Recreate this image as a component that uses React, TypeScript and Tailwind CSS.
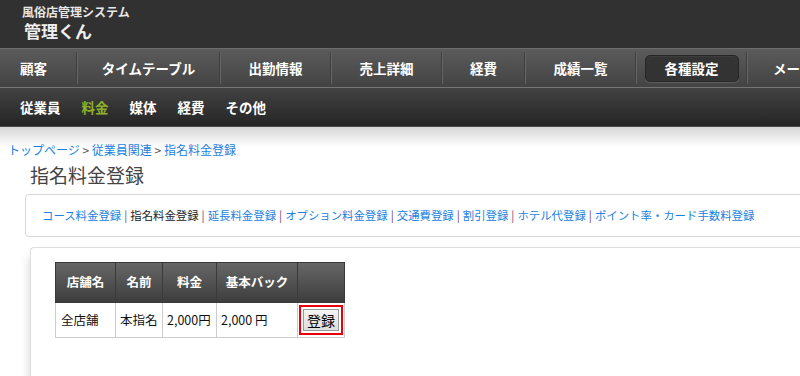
import React from 'react';

const font = { fontFamily: '"Noto Sans CJK JP", "Liberation Sans", sans-serif' };

const mainNav = [
  { label: '顧客', w: 'w-[76px]', left: true },
  { label: 'タイムテーブル', w: 'w-[141px]' },
  { label: '出勤情報', w: 'w-[109px]' },
  { label: '売上詳細', w: 'w-[109px]' },
  { label: '経費', w: 'w-[81px]' },
  { label: '成績一覧', w: 'w-[109px]' },
  { label: '各種設定', w: 'w-[109px]', active: true },
  { label: 'メール', w: 'w-[80px]', last: true },
];

const subNav = ['従業員', '料金', '媒体', '経費', 'その他'];

const links = [
  { label: 'コース料金登録', link: true },
  { label: '指名料金登録', link: false },
  { label: '延長料金登録', link: true },
  { label: 'オプション料金登録', link: true },
  { label: '交通費登録', link: true },
  { label: '割引登録', link: true },
  { label: 'ホテル代登録', link: true },
  { label: 'ポイント率・カード手数料登録', link: true },
];

const App = () => {
  return (
    <div className="w-[800px] h-[376px] overflow-hidden bg-white" style={font}>
      {/* Header */}
      <div className="h-[48px] bg-[#313131] pl-[22px] pt-[5px]">
        <div className="text-[12px] leading-[14px] text-[#e8e8e8] font-bold">風俗店管理システム</div>
        <div className="text-[17px] leading-[22px] text-[#eeeeee] font-bold pl-[2px] mt-[1px]">管理くん</div>
      </div>

      {/* Main nav */}
      <div className="h-[39px] flex items-stretch border-t border-[#6e6e6e] bg-gradient-to-b from-[#5b5b5b] to-[#434343] whitespace-nowrap">
        {mainNav.map((item, i) => (
          <React.Fragment key={item.label}>
            {i > 0 && (
              <div className="flex items-stretch py-[3px]">
                <div className="w-px bg-[#3e3e3e]" />
                <div className="w-px bg-[#666666]" />
              </div>
            )}
            <div className={`${item.w} shrink-0 flex items-center ${item.left ? 'pl-[20px]' : item.last ? 'pl-[25px]' : 'justify-center'}`}>
              {item.active ? (
                <div className="w-[94px] h-[27px] rounded-[5px] bg-[#333333] border border-[#262626] shadow-[inset_0_1px_0_#3d3d3d,0_1px_0_#5e5e5e] flex items-center justify-center text-[13.5px] font-bold text-white">
                  {item.label}
                </div>
              ) : (
                <span className="text-[13.5px] font-bold text-white">{item.label}</span>
              )}
            </div>
          </React.Fragment>
        ))}
      </div>

      {/* Sub nav */}
      <div className="h-[40px] flex items-center gap-[21px] pl-[20px] border-t border-[#757575] bg-gradient-to-b from-[#434343] to-[#252525] border-b border-b-[#4a4a4a]">
        {subNav.map((s) => (
          <span key={s} className={`text-[13.5px] font-bold ${s === '料金' ? 'text-[#8fb129]' : 'text-white'}`}>
            {s}
          </span>
        ))}
      </div>

      {/* Content */}
      <div className="bg-gradient-to-b from-[#d6d6d6] via-white to-white bg-no-repeat [background-size:100%_40px] pt-[16px]">
        <div className="pl-[8px] text-[12px] leading-[14px] text-[#1a7fe0]">
          トップページ<span className="text-[#555555]"> &gt; </span>従業員関連<span className="text-[#555555]"> &gt; </span>指名料金登録
        </div>
        <h1 className="pl-[30px] mt-[5px] text-[19px] leading-[25px] text-[#444444]">指名料金登録</h1>

        <div className="ml-[25px] -mr-[20px] mt-[7px] h-[43px] border border-[#d8d8d8] rounded-l-[4px] flex items-center pl-[16px] text-[11.4px] whitespace-nowrap">
          {links.map((l, i) => (
            <React.Fragment key={l.label}>
              {i > 0 && <span className="text-[#6a3a78] mx-[3px]">|</span>}
              <span className={l.link ? 'text-[#1a7fe0]' : 'text-[#222222]'}>{l.label}</span>
            </React.Fragment>
          ))}
        </div>

        <div className="ml-[30px] -mr-[20px] mt-[10px] h-[140px] border-t border-l border-[#dddddd] rounded-tl-[4px] shadow-[-6px_6px_8px_-4px_rgba(0,0,0,0.12)] pl-[24px] pt-[14px]">
          <table className="border-collapse text-[12.5px] whitespace-nowrap">
            <thead>
              <tr className="bg-gradient-to-b from-[#676767] to-[#3c3c3c] text-white h-[40px]">
                <th className="w-[60px] border border-[#3a3a3a] font-bold">店舗名</th>
                <th className="w-[47px] border border-[#3a3a3a] font-bold">名前</th>
                <th className="w-[54px] border border-[#3a3a3a] font-bold">料金</th>
                <th className="w-[81px] border border-[#3a3a3a] font-bold">基本バック</th>
                <th className="w-[47px] border border-[#3a3a3a]"></th>
              </tr>
            </thead>
            <tbody>
              <tr className="h-[35px] text-[#111111]">
                <td className="border border-[#cccccc] pl-[5px]">全店舗</td>
                <td className="border border-[#cccccc] pl-[4px]">本指名</td>
                <td className="border border-[#cccccc] pl-[4px]">2,000円</td>
                <td className="border border-[#cccccc] pl-[4px]">2,000 円</td>
                <td className="border border-[#cccccc] px-[1px]">
                  <div className="border-2 border-[#e8000b] px-[2px] py-[2px] flex justify-center">
                    <button className="border border-[#9a9a9a] bg-gradient-to-b from-[#f4f4f4] to-[#dedede] text-[14px] leading-[20px] px-[3px] text-black whitespace-nowrap">
                      登録
                    </button>
                  </div>
                </td>
              </tr>
            </tbody>
          </table>
        </div>
      </div>
    </div>
  );
};

export default App;
